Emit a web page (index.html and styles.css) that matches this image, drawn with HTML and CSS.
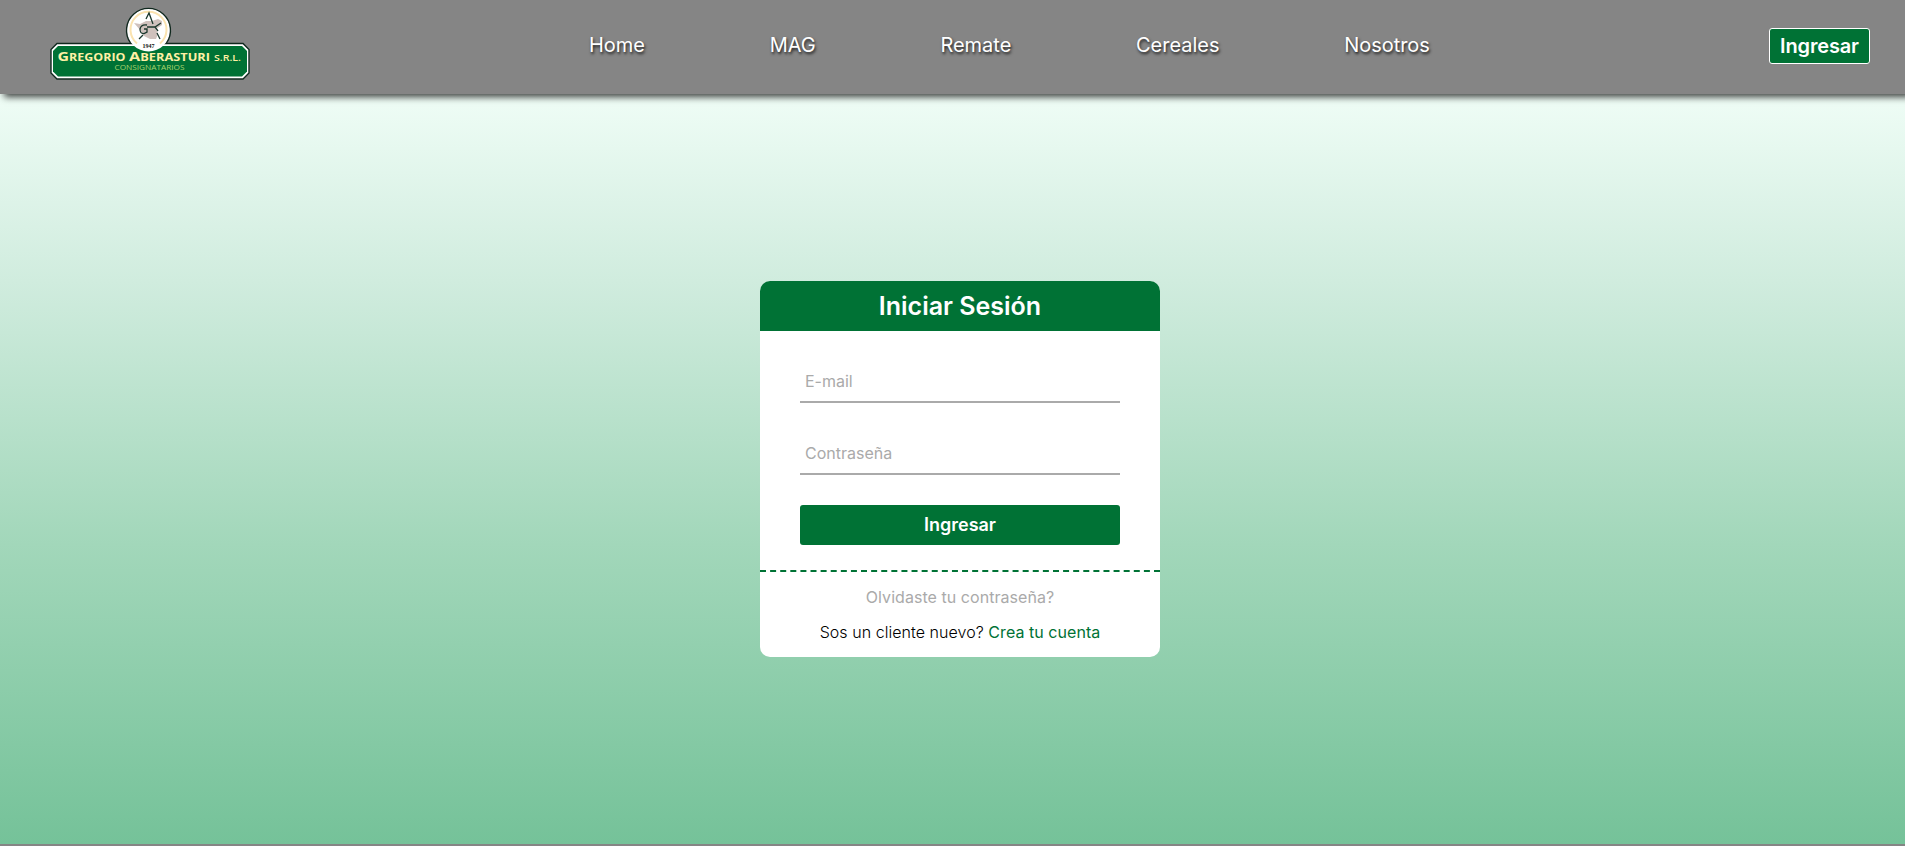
FILE: index.html
```html
<!DOCTYPE html>
<html lang="es">
<head>
<meta charset="utf-8">
<title>Iniciar Sesión</title>
<link rel="stylesheet" href="styles.css">
</head>
<body>
<header class="header">
  <a class="logo" href="#">
    <svg width="202" height="74" viewBox="0 0 202 74">
      <path d="M8 36.500H194L200 42.500V66L194 72H8L2 66V42.500Z" fill="#fff" stroke="#10281e" stroke-width="1.400"/>
      <path d="M9 39H193L198 44V64.500L193 69.500H9L4 64.500V44Z" fill="#007235"/>
      <circle cx="99.500" cy="23" r="21.500" fill="#fff"/>
      <path d="M81.500 36A22 22 0 1 1 117.500 36" fill="none" stroke="#10281e" stroke-width="1.300"/>
      <path d="M88 36.500A18 18 0 1 1 111 36.500" fill="none" stroke="#fbe3b0" stroke-width="2"/>
      <path d="M85 16L91 17 97 14 103 14 109 12 113 14 113 18 107 22 109 27 107 32 101 32 95 29 92 24Z" fill="#cfc1bd"/>
      <path d="M98 18Q92 17 91 22Q91 27 95 26.500L98 25V22H95M97 12L100 6L104 17M98 20H106L112 16M106 20L109 24M108 26L111 32M94 28L90 32" fill="none" stroke="#1c382e" stroke-width="1.300"/>
      <text x="99.500" y="40.500" class="logo-year">1947</text>
      <text x="8.500" y="54" class="logo-name" textLength="68" lengthAdjust="spacingAndGlyphs">G<tspan class="logo-caps">REGORIO</tspan></text>
      <text x="80" y="54" class="logo-name" textLength="81" lengthAdjust="spacingAndGlyphs">A<tspan class="logo-caps">BERASTURI</tspan></text>
      <text x="165" y="54" class="logo-srl" textLength="27" lengthAdjust="spacingAndGlyphs">S.R.L.</text>
      <text x="65.500" y="62.700" class="logo-sub" textLength="70" lengthAdjust="spacingAndGlyphs">CONSIGNATARIOS</text>
    </svg>
  </a>
  <nav class="nav">
    <a href="#">Home</a><a href="#">MAG</a><a href="#">Remate</a><a href="#">Cereales</a><a href="#">Nosotros</a>
  </nav>
  <a class="login-link" href="#">Ingresar</a>
</header>
<main class="main">
  <section class="card">
    <h1 class="title">Iniciar Sesión</h1>
    <form class="form">
      <input class="field" type="email" placeholder="E-mail">
      <input class="field" type="password" placeholder="Contraseña">
      <button class="submit" type="button">Ingresar</button>
    </form>
    <div class="links">
      <a class="forgot" href="#">Olvidaste tu contraseña?</a>
      <p class="signup">Sos un cliente nuevo? <a href="#">Crea tu cuenta</a></p>
    </div>
  </section>
</main>
<footer class="footer"></footer>
</body>
</html>
```
FILE: styles.css
```css
* { box-sizing: border-box; }
body { margin: 0; height: 846px; overflow: hidden; display: flex; flex-direction: column; font-family: Inter, sans-serif; }
a { text-decoration: none; }
.header { position: relative; height: 94px; flex: none; display: grid; grid-template-columns: 589px 1fr auto; align-items: center; padding-right: 35px; background: #858585; box-shadow: 5px 2px 7px 1px rgba(0,0,0,.75); }
.logo { padding: 7px 0 0 49px; align-self: start; height: 81px; }
.logo svg { display: block; }
.logo text { font-family: "Open Sans", sans-serif; fill: #fff0a5; }
.logo .logo-name { font-size: 12.5px; font-weight: 700; }
.logo .logo-caps { font-size: 9.8px; }
.logo .logo-srl { font-size: 8.5px; font-weight: 600; }
.logo .logo-sub { font-size: 7px; fill: #a9d26d; }
.logo .logo-year { font-family: "Liberation Serif", serif; font-size: 6px; font-weight: 700; text-anchor: middle; fill: #111; }
.nav { display: flex; gap: 124.7px; padding-bottom: 4px; }
.nav a { font-size: 20px; line-height: 24px; letter-spacing: -.02px; color: #fff; text-shadow: 1px 2px 3px rgba(0,0,0,.8); }
.login-link { height: 36px; width: 101px; margin-bottom: 2px; border: 1px solid #fff; border-radius: 3px; background: #007235; color: #fff; font-size: 20px; font-weight: 600; letter-spacing: -.15px; line-height: 34px; text-align: center; }
.main { height: 750px; padding-left: 15px; display: flex; justify-content: center; align-items: center; background: linear-gradient(180deg, #effdf6 0%, #d0ecde 25%, #a2d7ba 60%, #75c299 100%); }
.card { width: 400px; height: 376px; border-radius: 10px; background: #fff; overflow: hidden; }
.title { margin: 0; height: 50px; background: #007235; color: #fff; font-size: 25px; font-weight: 600; line-height: 50px; text-align: center; }
.form { display: flex; flex-direction: column; padding: 30px 40px 25px; }
.field { width: 100%; height: 42px; margin-bottom: 30px; padding: 0 5px; border: 0; border-bottom: 2px solid #aaa; font: 16px/20px Inter, sans-serif; }
.field::placeholder { color: #aaa; }
.submit { height: 40px; padding-bottom: 2px; border: 0; border-radius: 3px; background: #007235; color: #fff; font: 600 18px Inter, sans-serif; }
.links { border-top: 2px dashed #007235; padding-top: 15px; text-align: center; font-size: 16px; line-height: 20px; letter-spacing: .05px; }
.forgot { display: block; color: #aaa; }
.signup { margin: 15px 0 0; font-weight: 300; }
.signup a { color: #007235; font-weight: 400; }
.footer { height: 2px; background: #858585; }
```
